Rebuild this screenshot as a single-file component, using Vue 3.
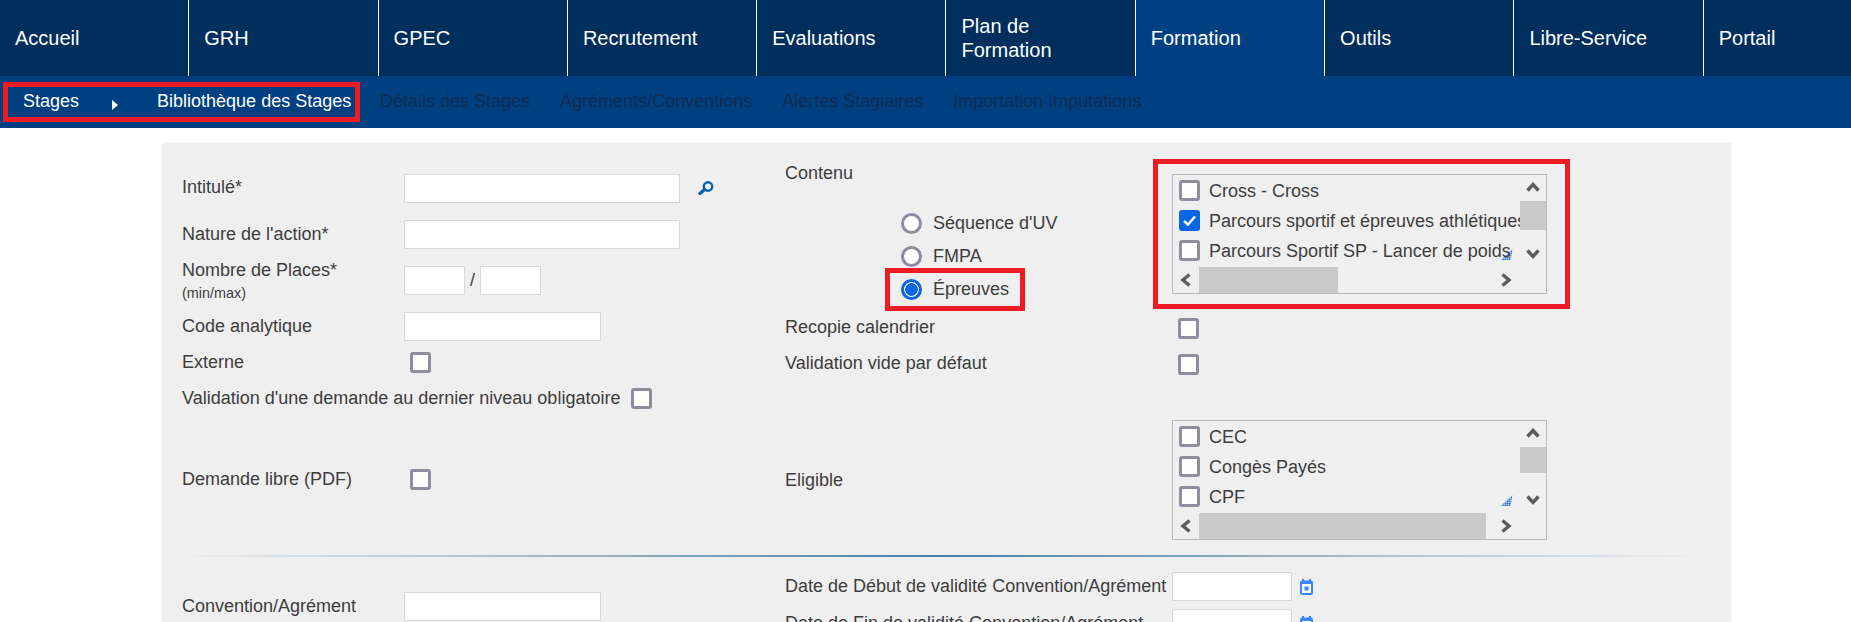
<template>
  <div class="page">
    <nav class="topnav">
      <a v-for="m in menu" :key="m" class="topitem" :class="{ active: m == 'Formation' }">{{ m }}</a>
    </nav>
    <div class="subnav">
      <div class="annot crumbs">
        <span>Stages</span>
        <i class="tri"></i>
        <span>Bibliothèque des Stages</span>
      </div>
      <span v-for="s in subItems" :key="s" class="dim">{{ s }}</span>
    </div>

    <div class="panel">
      <div class="section">
        <div class="col-left">
          <div class="row">
            <label class="intitule">Intitulé*</label>
            <input class="field wide" type="text" />
            <svg class="search" width="16" height="14" viewBox="0 0 16 14">
              <circle cx="10" cy="5.5" r="4.2" fill="#f6f9fd" stroke="#0b5cb5" stroke-width="2.4" />
              <path d="M6.5 8.5 2 12.5" stroke="#0b5cb5" stroke-width="3.2" stroke-linecap="round" />
            </svg>
          </div>
          <div class="row">
            <label class="nature">Nature de l'action*</label>
            <input class="field wide" type="text" />
          </div>
          <div class="row">
            <label class="two-lines">Nombre de Places*<small>(min/max)</small></label>
            <input class="field tiny" type="text" />
            <span class="slash">/</span>
            <input class="field tiny" type="text" />
          </div>
          <div class="row">
            <label>Code analytique</label>
            <input class="field mid" type="text" />
          </div>
          <div class="row externe">
            <label>Externe</label>
            <span class="cb"></span>
          </div>
          <div class="row validation">
            <span class="inline-label">Validation d'une demande au dernier niveau obligatoire</span>
            <span class="cb"></span>
          </div>
          <div class="row demande">
            <label>Demande libre (PDF)</label>
            <span class="cb"></span>
          </div>
        </div>

        <div class="col-right">
          <div class="contenu">
            <div class="contenu-left">
              <div class="txt">Contenu</div>
              <div class="radios">
                <div class="radio"><span class="rd"></span>Séquence d'UV</div>
                <div class="radio"><span class="rd"></span>FMPA</div>
                <div class="annot radio-box">
                  <div class="radio"><span class="rd on"></span>Épreuves</div>
                </div>
              </div>
            </div>
            <div class="annot list-box">
              <div class="list">
                <div class="list-items">
                  <div v-for="o in epreuves" :key="o.t" class="opt">
                    <span class="cb" :class="{ on: o.on }">
                      <svg v-if="o.on" width="15" height="15" viewBox="0 0 15 15"><path d="M2 8 6 11.5 13 3.5" fill="none" stroke="#fff" stroke-width="2.4" /></svg>
                    </span>
                    <span class="opt-t">{{ o.t }}</span>
                  </div>
                  <svg class="grip" width="12" height="11" viewBox="0 0 12 11">
                    <defs><pattern id="gripdots" width="2" height="2" patternUnits="userSpaceOnUse"><rect width="1.6" height="1.6" fill="#2a70d0" /></pattern></defs>
                    <path d="M0 11 11.5 0 9.5 11Z" fill="url(#gripdots)" />
                  </svg>
                </div>
                <div class="vbar">
                  <svg class="chev" width="14" height="10" viewBox="0 0 14 10"><path d="M1.5 8.5 7 2.5 12.5 8.5" fill="none" stroke="#5c5c5c" stroke-width="3.4" /></svg>
                  <div class="vthumb first"></div>
                  <svg class="chev down" width="14" height="10" viewBox="0 0 14 10"><path d="M1.5 1.5 7 7.5 12.5 1.5" fill="none" stroke="#5c5c5c" stroke-width="3.4" /></svg>
                </div>
                <div class="hbar">
                  <svg width="11" height="14" viewBox="0 0 11 14"><path d="M9.5 1.5 3 7l6.5 5.5" fill="none" stroke="#5c5c5c" stroke-width="3.4" /></svg>
                  <div class="htrack"><div class="hthumb" :style="{ width: '139px' }"></div></div>
                  <svg width="11" height="14" viewBox="0 0 11 14"><path d="M1.5 1.5 8 7l-6.5 5.5" fill="none" stroke="#5c5c5c" stroke-width="3.4" /></svg>
                </div>
              </div>
            </div>
          </div>

          <div class="rrow recopie">
            <span class="rlabel">Recopie calendrier</span>
            <span class="cb"></span>
          </div>
          <div class="rrow vide">
            <span class="rlabel">Validation vide par défaut</span>
            <span class="cb"></span>
          </div>
          <div class="rrow eligible">
            <span class="rlabel">Eligible</span>
            <div class="list">
              <div class="list-items">
                <div v-for="o in eligibles" :key="o" class="opt">
                  <span class="cb"></span>
                  <span class="opt-t">{{ o }}</span>
                </div>
                <svg class="grip" width="12" height="11" viewBox="0 0 12 11">
                  <path d="M0 11 11.5 0 9.5 11Z" fill="url(#gripdots)" />
                </svg>
              </div>
              <div class="vbar">
                <svg class="chev" width="14" height="10" viewBox="0 0 14 10"><path d="M1.5 8.5 7 2.5 12.5 8.5" fill="none" stroke="#5c5c5c" stroke-width="3.4" /></svg>
                <div class="vthumb second"></div>
                <svg class="chev down" width="14" height="10" viewBox="0 0 14 10"><path d="M1.5 1.5 7 7.5 12.5 1.5" fill="none" stroke="#5c5c5c" stroke-width="3.4" /></svg>
              </div>
              <div class="hbar">
                <svg width="11" height="14" viewBox="0 0 11 14"><path d="M9.5 1.5 3 7l6.5 5.5" fill="none" stroke="#5c5c5c" stroke-width="3.4" /></svg>
                <div class="htrack"><div class="hthumb" :style="{ width: '287px' }"></div></div>
                <svg width="11" height="14" viewBox="0 0 11 14"><path d="M1.5 1.5 8 7l-6.5 5.5" fill="none" stroke="#5c5c5c" stroke-width="3.4" /></svg>
              </div>
            </div>
          </div>
        </div>
      </div>

      <div class="divider"></div>

      <div class="section bottom">
        <div class="col-left">
          <div class="row convention">
            <label>Convention/Agrément</label>
            <input class="field mid" type="text" />
          </div>
        </div>
        <div class="col-right dates">
          <div v-for="d in dates" :key="d" class="rrow date">
            <span class="rlabel">{{ d }}</span>
            <input class="field date-in" type="text" />
            <svg class="cal" width="13" height="16" viewBox="0 0 13 16">
              <rect x="0" y="1.5" width="13" height="14.5" rx="2" fill="#3a86ff" />
              <rect x="2" y="5" width="9" height="9" fill="#fff" />
              <rect x="4.5" y="7.5" width="4" height="4" fill="#3a86ff" />
              <rect x="2" y="0" width="2" height="3" fill="#3a86ff" />
              <rect x="9" y="0" width="2" height="3" fill="#3a86ff" />
            </svg>
          </div>
        </div>
      </div>
    </div>
  </div>
</template>

<script setup>
const menu = ['Accueil', 'GRH', 'GPEC', 'Recrutement', 'Evaluations', 'Plan de Formation', 'Formation', 'Outils', 'Libre-Service', 'Portail']
const subItems = ['Détails des Stages', 'Agréments/Conventions', 'Alertes Stagiaires', 'Importation Imputations']
const epreuves = [
  { t: 'Cross - Cross', on: false },
  { t: 'Parcours sportif et épreuves athlétiques', on: true },
  { t: 'Parcours Sportif SP - Lancer de poids', on: false }
]
const eligibles = ['CEC', 'Congès Payés', 'CPF']
const dates = ['Date de Début de validité Convention/Agrément', 'Date de Fin de validité Convention/Agrément']
</script>

<style>
html, body { margin: 0; overflow: hidden; background: #fff; }
</style>

<style scoped>
.page {
  width: 1851px;
  height: 622px;
  overflow: hidden;
  font-family: "Liberation Sans", Arial, sans-serif;
  font-size: 18px;
  color: #3d3d3d;
}
.topnav {
  display: flex;
  height: 76px;
  background: #002e5d;
}
.topitem {
  flex: 0 0 189.3px;
  box-sizing: border-box;
  display: flex;
  align-items: center;
  padding: 1px 30px 0 15px;
  border-right: 1px solid #fff;
  color: #fff;
  font-size: 20px;
  line-height: 23.4px;
}
.topitem:last-child { flex: 1; border-right: 0; }
.topitem.active { background: #004080; }
.subnav {
  display: flex;
  align-items: center;
  column-gap: 30px;
  height: 52px;
  background: #004080;
  padding-left: 3px;
  white-space: nowrap;
}
.annot {
  box-sizing: border-box;
  border: 5px solid #ed1c24;
}
.crumbs {
  display: flex;
  align-items: center;
  width: 357px;
  height: 40px;
  padding: 0 0 2px 15px;
  color: #fff;
}
.tri {
  flex: none;
  width: 0;
  height: 0;
  margin: 7px 39px 0 33px;
  border-left: 6px solid #fff;
  border-top: 5.5px solid transparent;
  border-bottom: 5.5px solid transparent;
}
.dim { color: #0e2d55; padding-bottom: 2px; }
.crumbs + .dim { margin-left: -10px; }

.panel {
  width: 1569px;
  height: 600px;
  margin: 15px 0 0 162px;
  background: #efefef;
  box-shadow: 0 0 4px rgba(0, 0, 0, .06);
}
.section { display: flex; }
.col-left {
  box-sizing: border-box;
  width: 623px;
  padding: 31px 0 0 20px;
}
.col-right { padding-top: 20px; }
.row { display: flex; align-items: center; height: 29px; }
.row + .row { margin-top: 17px; }
.row label { width: 222px; }
.row label.intitule { padding-bottom: 3px; }
.row label.nature { padding-bottom: 1px; }
.row .two-lines { display: block; margin-top: -1px; line-height: 20px; }
.two-lines small { display: block; font-size: 14.4px; line-height: 16px; margin-top: 5px; }
.field {
  box-sizing: border-box;
  height: 29px;
  border: 1px solid #d8d8d8;
  background: #fff;
  padding: 0;
  outline: 0;
}
.wide { width: 276px; }
.mid { width: 197px; }
.tiny { width: 61px; }
.slash { width: 15px; text-align: center; }
.search { margin-left: 18px; margin-bottom: 2px; }
.row.externe { margin-top: 11px; height: 21px; }
.row.validation { margin-top: 15px; height: 21px; }
.row.demande { margin-top: 60px; height: 21px; }
.row.externe .cb, .row.demande .cb { margin-left: 6px; }
.inline-label { margin-right: 11px; }

.cb {
  flex: none;
  box-sizing: border-box;
  display: inline-flex;
  align-items: center;
  justify-content: center;
  width: 21px;
  height: 21px;
  border: 3px solid #8f8d9d;
  border-radius: 3px;
  background: #fff;
}
.cb.on { background: #0b66e4; border-color: #0b66e4; }
.rd {
  flex: none;
  box-sizing: border-box;
  width: 21px;
  height: 21px;
  margin-right: 11px;
  border: 3px solid #8f8d9d;
  border-radius: 50%;
  background: #fff;
}
.rd.on {
  border-color: #0b66e4;
  background: radial-gradient(circle, #0b66e4 0 6px, #fff 6.6px);
}
.contenu { display: flex; }
.contenu-left { width: 368px; height: 146px; }
.txt { line-height: 20px; }
.radios { margin: 30px 0 0 116px; }
.radio { display: flex; align-items: center; height: 21px; }
.radio + .radio { margin-top: 12px; }
.radio-box {
  width: 140px;
  height: 43px;
  margin: 1px 0 0 -16px;
  padding: 6px 0 0 11px;
}
.list-box {
  width: 417px;
  height: 150px;
  margin-top: -4px;
  padding: 10px 18px 10px 14px;
}
.list {
  box-sizing: border-box;
  display: grid;
  grid-template-columns: 347px 26px;
  grid-template-rows: 92px 26px;
  width: 375px;
  height: 120px;
  border: 1px solid #bbb;
}
.list-items {
  position: relative;
  overflow: hidden;
  padding-top: 5px;
}
.opt {
  position: relative;
  z-index: 1;
  display: flex;
  align-items: center;
  height: 21px;
  margin: 0 0 9px 6px;
  white-space: nowrap;
}
.opt-t { margin-left: 9px; padding-top: 2px; }
.grip { position: absolute; right: 7px; bottom: 7px; }
.vbar {
  display: flex;
  flex-direction: column;
  align-items: center;
}
.chev { flex: none; margin-top: 7px; }
.chev.down { margin-top: auto; margin-bottom: 8px; }
.vthumb { width: 26px; background: #c9c9c9; }
.vthumb.first { height: 29px; margin-top: 9px; }
.vthumb.second { height: 26px; margin-top: 9px; }
.hbar {
  grid-column: 1 / 2;
  display: flex;
  align-items: center;
  padding: 0 8px 0 7px;
  height: 26px;
  box-sizing: border-box;
}
.htrack { flex: 1; margin: 0 3px 0 8px; height: 26px; }
.hthumb { height: 26px; background: #c9c9c9; }
.rrow { display: flex; align-items: center; }
.rlabel { flex: none; width: 387px; }
.rrow > .cb { margin-left: 6px; }
.recopie { margin-top: 9px; height: 21px; }
.vide { margin-top: 15px; height: 21px; }
.recopie .rlabel, .vide .rlabel { padding-bottom: 2px; }
.eligible { margin-top: 45px; }

.divider {
  width: 1523px;
  height: 2px;
  margin: 15px 0 0 15px;
  background: linear-gradient(90deg, transparent, #4a7fa5 50%, transparent);
}
.bottom .col-left { padding-top: 35px; }
.bottom .col-right { padding-top: 15px; }
.date { height: 29px; margin-bottom: 8px; }
.date-in { width: 120px; }
.cal { margin-left: 8px; }
</style>
